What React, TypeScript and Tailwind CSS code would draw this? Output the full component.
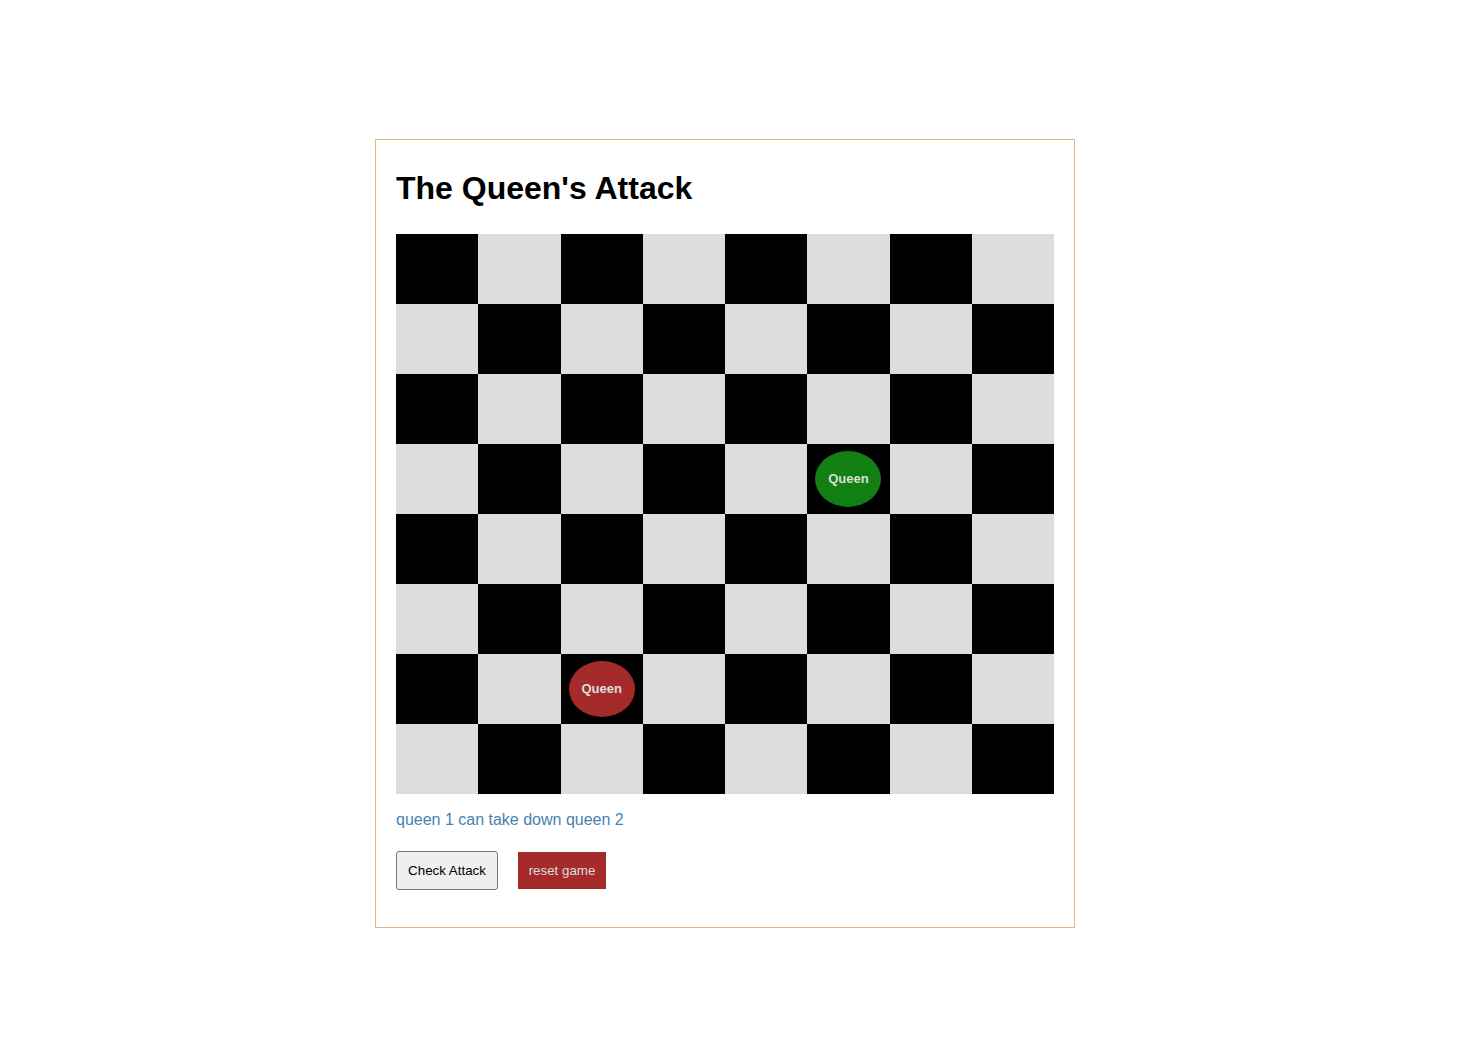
import React from "react";

type Queen = { row: number; col: number; color: string };

const queens: Queen[] = [
  { row: 3, col: 5, color: "bg-[#117f11]" },
  { row: 6, col: 2, color: "bg-[#a52a2a]" },
];

const App: React.FC = () => {
  const cells = [];
  for (let r = 0; r < 8; r++) {
    for (let c = 0; c < 8; c++) {
      const q = queens.find((x) => x.row === r && x.col === c);
      cells.push(
        <div
          key={`${r}-${c}`}
          className={`h-[70px] flex items-center justify-center ${
            (r + c) % 2 === 0 ? "bg-black" : "bg-[#dddddd]"
          }`}
        >
          {q && (
            <div
              className={`w-[80%] h-[80%] rounded-[50%] flex items-center justify-center text-[13px] font-bold text-[#dddddd] ${q.color}`}
            >
              Queen
            </div>
          )}
        </div>
      );
    }
  }

  return (
    <div
      className="min-h-screen bg-white pt-[139px]"
      style={{ fontFamily: '"Liberation Sans", Arial, sans-serif' }}
    >
      <div className="ml-[375px] w-[700px] border border-[#deb887] px-5 pt-[30px] pb-[37px]">
        <h1 className="text-[32px] leading-[37px] font-bold text-black mb-[27px]">
          The Queen's Attack
        </h1>

        {/* Board */}
        <div className="grid grid-cols-8 w-[658px]">{cells}</div>

        <p className="mt-[17px] text-[16px] leading-[18px] text-[#4682b4]">
          queen 1 can take down queen 2
        </p>

        <div className="flex items-center gap-5 mt-[22px]">
          <button className="h-[39px] w-[102px] border border-[#767676] rounded-[3px] bg-[#efefef] text-[13.33px] text-black">
            Check Attack
          </button>
          <button className="h-[37px] w-[88px] bg-[#a52a2a] text-[13.33px] text-[#dddddd]">
            reset game
          </button>
        </div>
      </div>
    </div>
  );
};

export default App;
